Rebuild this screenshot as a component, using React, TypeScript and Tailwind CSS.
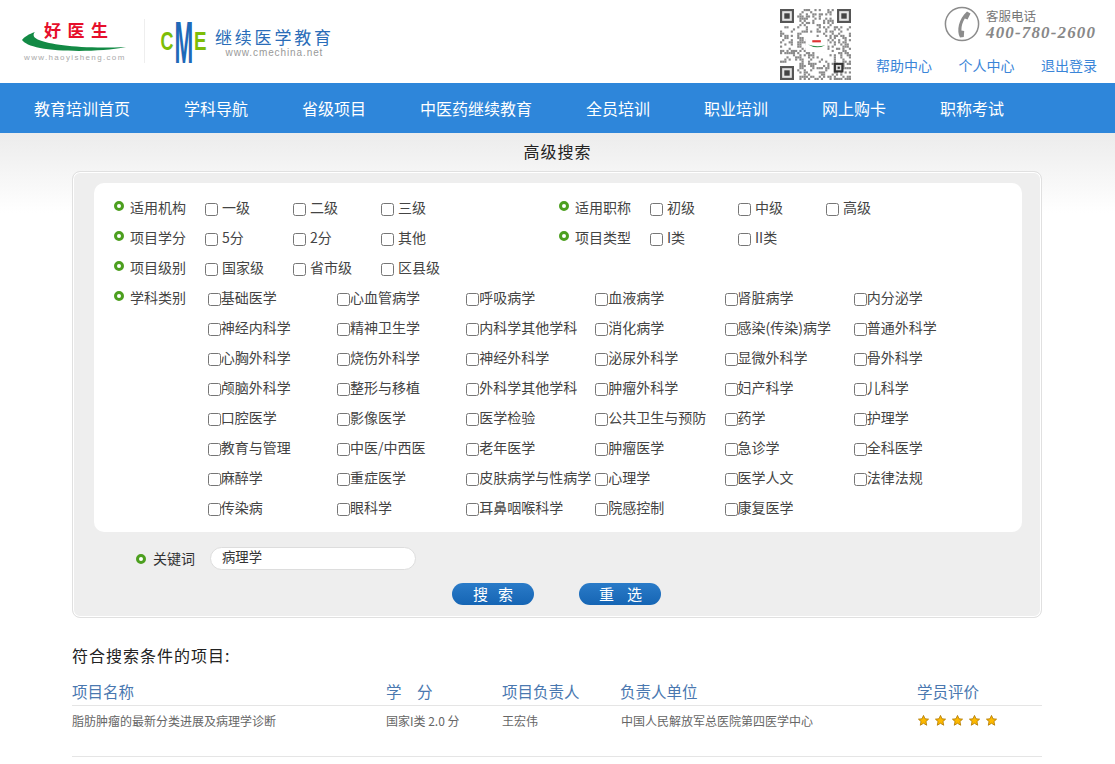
import clsx from "clsx"

const navItems = ["教育培训首页", "学科导航", "省级项目", "中医药继续教育", "全员培训", "职业培训", "网上购卡", "职称考试"]

const subjects = [
	"基础医学", "心血管病学", "呼吸病学", "血液病学", "肾脏病学", "内分泌学",
	"神经内科学", "精神卫生学", "内科学其他学科", "消化病学", "感染(传染)病学", "普通外科学",
	"心胸外科学", "烧伤外科学", "神经外科学", "泌尿外科学", "显微外科学", "骨外科学",
	"颅脑外科学", "整形与移植", "外科学其他学科", "肿瘤外科学", "妇产科学", "儿科学",
	"口腔医学", "影像医学", "医学检验", "公共卫生与预防", "药学", "护理学",
	"教育与管理", "中医/中西医", "老年医学", "肿瘤医学", "急诊学", "全科医学",
	"麻醉学", "重症医学", "皮肤病学与性病学", "心理学", "医学人文", "法律法规",
	"传染病", "眼科学", "耳鼻咽喉科学", "院感控制", "康复医学",
]

const qrSeed = (x: number, y: number) => ((x * 7919 + y * 104729 + x * y * 31) ^ (x * x + y * 13)) % 5 < 2

const QrCode = () => {
	const cells = []
	for (let y = 0; y < 33; y++) {
		for (let x = 0; x < 33; x++) {
			const inFinder = (x < 8 && y < 8) || (x > 24 && y < 8) || (x < 8 && y > 24)
			if (!inFinder && qrSeed(x, y)) cells.push(<rect key={`${x}-${y}`} x={x} y={y} width="1" height="1" fill="#8a8a8a" />)
		}
	}
	const finder = (x: number, y: number) => (
		<g key={`${x}-${y}`}>
			<rect x={x} y={y} width="6.5" height="6.5" fill="#555" />
			<rect x={x + 1} y={y + 1} width="4.5" height="4.5" fill="#e4e4e4" />
			<rect x={x + 2} y={y + 2} width="2.5" height="2.5" fill="#444" />
		</g>
	)
	return (
		<svg viewBox="0 0 33 33" className="h-[71px] w-[71px] shrink-0 blur-[0.35px]">
			{cells}
			{finder(0, 0)}
			{finder(26.5, 0)}
			{finder(0, 26.5)}
			<rect x="12" y="13" width="10" height="7" fill="#fff" />
			<path d="M13 16.5 Q17 18 21 16.8 Q17 19 13 16.5Z" fill="#2e8b4a" />
			<rect x="15" y="14.5" width="4" height="1" fill="#d33" />
			<rect x="25" y="25" width="4.5" height="4.5" fill="#333" />
			<rect x="26" y="26" width="2.5" height="2.5" fill="#ddd" />
			<rect x="26.8" y="26.8" width="1" height="1" fill="#333" />
		</svg>
	)
}

const PhoneIcon = () => (
	<svg viewBox="0 0 36 36" className="h-[36px] w-[36px] shrink-0">
		<circle cx="18" cy="18" r="16.6" fill="none" stroke="#8c8c8c" strokeWidth="1.5" />
		<path
			d="M23 5.5 L26.5 7.5 L23.5 13.5 L20.8 12.6 C18.6 16 17.4 20 17.4 24.4 L20.2 25 L19.8 31 L16 31.5 C12.4 25 14.6 12.6 23 5.5Z"
			fill="#8c8c8c"
		/>
	</svg>
)

const HaoLogo = () => (
	<svg viewBox="0 0 106 42" className="h-[42px] w-[106px] shrink-0 overflow-visible">
		<text x="22" y="16" fontFamily="'Noto Sans CJK SC', sans-serif" fontSize="17" fontWeight="700" fill="#e60f2b" letterSpacing="6.5">
			好医生
		</text>
		<path d="M0 19 C2 16 7 13 13 11 C10 14 12 17 17 19 C30 24 60 28 104 26 C78 31 40 31 18 27 C8 25 2 22 0 19Z" fill="#138a45" />
		<text x="2" y="39" fontFamily="'Liberation Sans', sans-serif" fontSize="8" fill="#aaa" letterSpacing="1.35">
			www.haoyisheng.com
		</text>
	</svg>
)

const CmeLogo = () => (
	<svg viewBox="0 0 48 44" className="h-[44px] w-[48px] shrink-0 overflow-visible">
		<text transform="translate(-0.5 30) scale(0.72 1)" fontFamily="'Liberation Sans', sans-serif" fontSize="25" fontWeight="700" fill="#7dbd07">
			C
		</text>
		<text transform="translate(33 30) scale(0.75 1)" fontFamily="'Liberation Sans', sans-serif" fontSize="25" fontWeight="700" fill="#7dbd07">
			E
		</text>
		<text transform="translate(13.5 43) scale(0.9 2.4)" fontFamily="'Liberation Sans', sans-serif" fontSize="25" fontWeight="700" fill="#1f69b8">
			M
		</text>
	</svg>
)

const Dot = ({ className }: { className?: string }) => (
	<span className={clsx("block h-[10px] w-[10px] shrink-0 rounded-full border-[3px] border-[#4c9f1f] bg-white", className)} />
)

const FilterLabel = ({ children, className }: { children: string; className?: string }) => (
	<div className={clsx("flex w-[91px] shrink-0 items-center gap-[6px]", className)}>
		<Dot className="-mt-[2px]" />
		<span className="text-[14px] leading-[20px] text-[#444]">{children}</span>
	</div>
)

const Option = ({ label }: { label: string }) => (
	<label className="flex w-[88px] shrink-0 items-center gap-[4px] text-[14px] leading-[20px] text-[#444]">
		<input type="checkbox" className="mt-[4px] h-[13px] w-[13px]" />
		{label}
	</label>
)

const Stars = () => (
	<div className="ml-[1px] flex gap-[6px] pt-[3px]">
		{[0, 1, 2, 3, 4].map((i) => (
			<svg key={i} viewBox="0.5 0.5 13 13" className="h-[11px] w-[11px]">
				<polygon
					points="7,1 8.8,5 13,5.4 9.9,8.2 10.8,12.6 7,10.3 3.2,12.6 4.1,8.2 1,5.4 5.2,5"
					fill="#fdb900"
					stroke="#b27a00"
					strokeWidth="1"
				/>
			</svg>
		))}
	</div>
)

export default function App() {
	return (
		<div className="h-[764px] overflow-hidden bg-white font-['Noto_Sans_CJK_SC','Noto_Sans',sans-serif]">
			<header className="flex h-[83px]">
				<div className="flex pl-[22px] pt-[21px]">
					<HaoLogo />
					<div className="ml-[16px] -mt-[2px] h-[44px] w-px bg-[#eee]" />
					<div className="ml-[16px] -mt-[1px]">
						<CmeLogo />
					</div>
					<div className="ml-[6px] mt-[6px] flex flex-col items-center">
						<span className="text-[17px] leading-[20px] tracking-[2.8px] text-[#2a6db8]">继续医学教育</span>
						<span className="font-['Liberation_Sans'] text-[10px] leading-[12px] tracking-[0.9px] text-[#999]">www.cmechina.net</span>
					</div>
				</div>
				<div className="ml-auto flex pr-[18px] pt-[9px]">
					<QrCode />
					<div className="ml-[24px] flex w-[222px] flex-col items-end">
						<div className="-mt-[5px] flex h-[40px] w-[153px] items-center gap-[6px]">
							<PhoneIcon />
							<div className="flex flex-col">
								<span className="text-[12.5px] leading-[16px] text-[#777]">客服电话</span>
								<span className="font-['Liberation_Serif'] text-[17px] font-bold italic leading-[17px] tracking-[1.15px] text-[#888]">
									400-780-2600
								</span>
							</div>
						</div>
						<div className="mt-[11px] flex gap-[26.5px] text-[14px] leading-[20px] text-[#3a85d8]">
							<a>帮助中心</a>
							<a>个人中心</a>
							<a>退出登录</a>
						</div>
					</div>
				</div>
			</header>

			<nav className="flex h-[50px] items-center gap-[54px] bg-[#2e86da] pl-[34px] text-[16px] text-white">
				{navItems.map((item) => (
					<a key={item}>{item}</a>
				))}
			</nav>

			<main className="bg-gradient-to-b from-[#ececec] to-white to-[80px]">
				<h2 className="h-[38px] text-center text-[16px] leading-[36px] tracking-[1px] text-[#222]">高级搜索</h2>

				<section className="ml-[72px] mr-[73px] h-[447px] rounded-[8px] border border-[#e0e0e0] bg-[#eee] pl-[21px] pr-[19px] pt-[11px] shadow-[inset_0_0_0_1px_#fff]">
					<div className="h-[349px] rounded-[10px] bg-white pl-[20px] pt-[9px]">
						<div className="flex h-[30px] items-center">
							<div className="flex w-[445px] items-center">
								<FilterLabel>适用机构</FilterLabel>
								<Option label="一级" />
								<Option label="二级" />
								<Option label="三级" />
							</div>
							<FilterLabel>适用职称</FilterLabel>
							<Option label="初级" />
							<Option label="中级" />
							<Option label="高级" />
						</div>
						<div className="flex h-[30px] items-center">
							<div className="flex w-[445px] items-center">
								<FilterLabel>项目学分</FilterLabel>
								<Option label="5分" />
								<Option label="2分" />
								<Option label="其他" />
							</div>
							<FilterLabel>项目类型</FilterLabel>
							<Option label="I类" />
							<Option label="II类" />
						</div>
						<div className="flex h-[30px] items-center">
							<FilterLabel>项目级别</FilterLabel>
							<Option label="国家级" />
							<Option label="省市级" />
							<Option label="区县级" />
						</div>
						<div className="flex">
							<FilterLabel className="h-[30px]">学科类别</FilterLabel>
							<div className="ml-[2.8px] grid grid-cols-[repeat(6,129.2px)]">
								{subjects.map((name) => (
									<label key={name} className="flex h-[30px] items-center whitespace-nowrap text-[14px] leading-[20px] text-[#444]">
										<input type="checkbox" className="mt-[4px] h-[13px] w-[13px] shrink-0" />
										{name}
									</label>
								))}
							</div>
						</div>
					</div>

					<div className="ml-[42px] mt-[15px] flex h-[23px] items-center">
						<Dot />
						<span className="mb-[2px] ml-[7px] text-[14px] leading-[20px] text-[#333]">关键词</span>
						<input
							defaultValue="病理学"
							className="ml-[15px] h-[23px] w-[206px] rounded-full border border-[#ddd] bg-white pb-[5px] pl-[11px] pr-[11px] text-[13.33px] text-[#333] outline-none"
						/>
					</div>

					<div className="ml-[358px] mt-[13px] flex gap-[45px]">
						<button type="button" className="h-[22px] w-[82px] rounded-full bg-gradient-to-b from-[#2a7bc8] to-[#1565b4] pl-[10px] text-[15px] leading-[22px] tracking-[10px] text-white">
							搜索
						</button>
						<button type="button" className="h-[22px] w-[82px] rounded-full bg-gradient-to-b from-[#2a7bc8] to-[#1565b4] pl-[14px] text-[15px] leading-[22px] tracking-[13px] text-white">
							重选
						</button>
					</div>
				</section>

				<section className="ml-[72px] mr-[73px] mt-[25px]">
					<h3 className="text-[16px] leading-[24px] tracking-[1px] text-[#222]">符合搜索条件的项目:</h3>
					<div className="mt-[12px] grid h-[27px] grid-cols-[314px_116px_118px_297px_1fr] border-b border-[#e5e5e5] text-[15.5px] leading-[24px] text-[#4a78b0]">
						<span>项目名称</span>
						<span>学　分</span>
						<span>项目负责人</span>
						<span>负责人单位</span>
						<span>学员评价</span>
					</div>
					<div className="grid h-[51px] grid-cols-[314px_116px_118px_297px_1fr] border-b border-[#e5e5e5] pt-[6px] text-[12px] leading-[18px] text-[#666]">
						<span>脂肪肿瘤的最新分类进展及病理学诊断</span>
						<span>国家I类 2.0 分</span>
						<span>王宏伟</span>
						<span className="pl-[1px]">中国人民解放军总医院第四医学中心</span>
						<Stars />
					</div>
				</section>
			</main>
		</div>
	)
}
